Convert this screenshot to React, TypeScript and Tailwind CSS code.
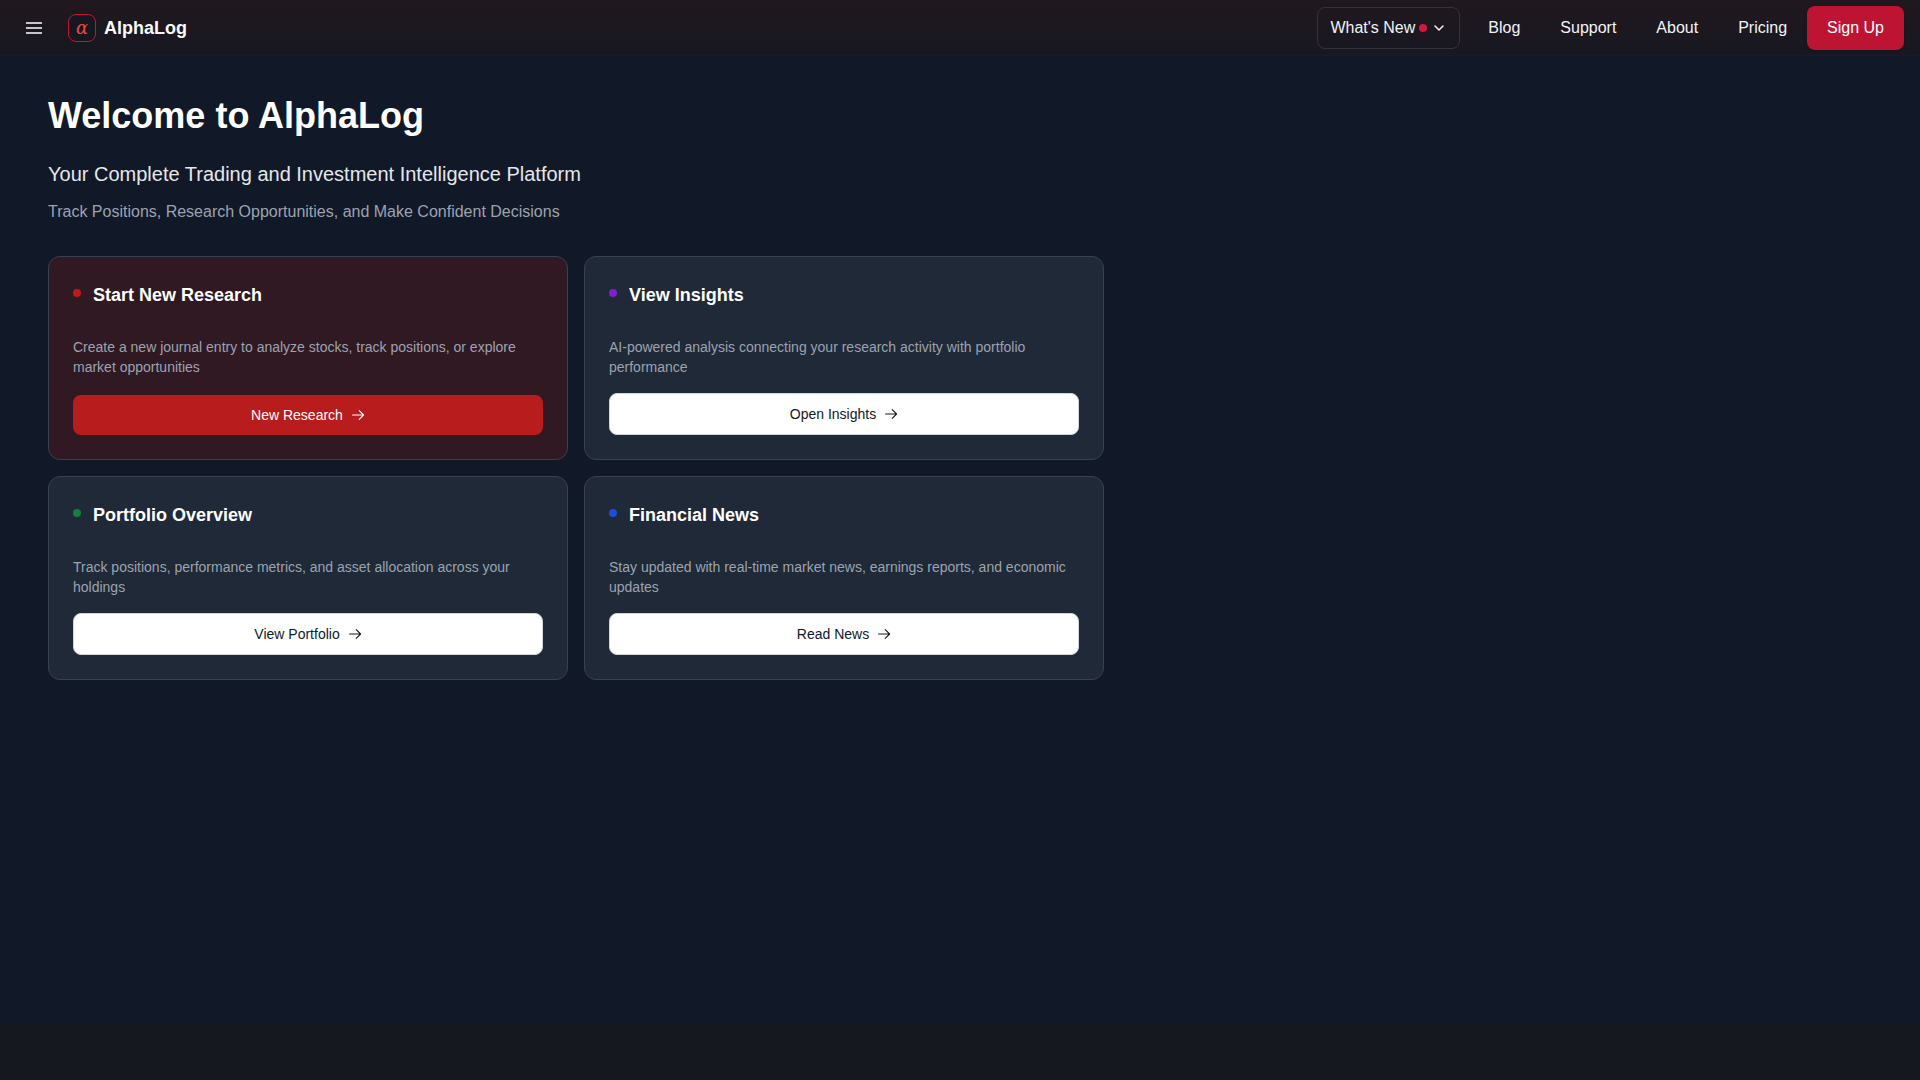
import React from "react";

const arrow = (
  <svg viewBox="0 0 14 14" className="h-3.5 w-3.5" fill="none" stroke="currentColor" strokeWidth="1.1" strokeLinecap="round" strokeLinejoin="round" aria-hidden="true">
    <path d="M1.6 7h11M8.2 2.6L12.6 7l-4.4 4.4" />
  </svg>
);

type CardData = {
  title: string;
  text: string;
  action: string;
  dot: string;
  primary?: boolean;
};

const cards: CardData[] = [
  {
    title: "Start New Research",
    text: "Create a new journal entry to analyze stocks, track positions, or explore market opportunities",
    action: "New Research",
    dot: "bg-[#b91c1c]",
    primary: true,
  },
  {
    title: "View Insights",
    text: "AI-powered analysis connecting your research activity with portfolio performance",
    action: "Open Insights",
    dot: "bg-[#7e22ce]",
  },
  {
    title: "Portfolio Overview",
    text: "Track positions, performance metrics, and asset allocation across your holdings",
    action: "View Portfolio",
    dot: "bg-[#15803d]",
  },
  {
    title: "Financial News",
    text: "Stay updated with real-time market news, earnings reports, and economic updates",
    action: "Read News",
    dot: "bg-[#1d4ed8]",
  },
];

function Card({ title, text, action, dot, primary }: CardData) {
  return (
    <article className={`flex min-h-[204px] flex-col rounded-xl border border-[#374151] p-6 ${primary ? "bg-[#301923]" : "bg-[#1f2937]"}`}>
      <div className="flex h-6 items-center gap-3">
        <span className={`h-2 w-2 rounded-full ${dot}`} />
        <h2 className="pt-1 text-lg font-bold text-white">{title}</h2>
      </div>
      <p className="mt-8 mb-4 text-sm text-[#9ca3af]">{text}</p>
      <button
        type="button"
        className={`mt-auto flex w-full items-center justify-center gap-2 rounded-lg text-sm ${
          primary ? "h-10 bg-[#b91c1c] text-white" : "h-[42px] border border-[#d1d5db] bg-white text-[#111827]"
        }`}
      >
        {action}
        {arrow}
      </button>
    </article>
  );
}

export default function App() {
  return (
    <div className="flex min-h-screen flex-col bg-[#16181f] font-['Liberation_Sans',Arial,sans-serif]">
      <header className="flex h-14 items-center justify-between border-b border-[#23181f] bg-linear-to-b from-[#21171e] to-[#171821] px-4">
        <div className="flex items-center">
          <button type="button" aria-label="Open menu" className="flex h-9 w-9 flex-col items-center justify-center gap-[3px] text-[#c4c5c8]">
            <span className="h-0.5 w-4 bg-current" />
            <span className="h-0.5 w-4 bg-current" />
            <span className="h-0.5 w-4 bg-current" />
          </button>
          <a href="#" className="ml-4 flex items-center gap-2 text-lg font-bold text-[#f9fafb]">
            <span className="flex h-7 w-7 items-center justify-center rounded-lg border border-[#c41435] bg-[#16181f] font-['DejaVu_Serif',serif] text-lg font-normal text-[#ef4444] italic">
              α
            </span>
            AlphaLog
          </a>
        </div>
        <nav className="flex items-center text-base text-[#f3f4f6]">
          <button type="button" className="mr-2 flex h-[42px] items-center rounded-lg border border-[#37303a] px-3">
            What's New
            <span className="ml-1 h-2 w-2 rounded-full bg-[#d4183d]" />
            <svg viewBox="0 0 16 16" className="ml-1 h-4 w-4" fill="none" stroke="currentColor" strokeWidth="1.5" strokeLinecap="round" strokeLinejoin="round" aria-hidden="true">
              <path d="M4 6l4 4 4-4" />
            </svg>
          </button>
          <a href="#blog" className="px-5">Blog</a>
          <a href="#support" className="px-5">Support</a>
          <a href="#about" className="px-5">About</a>
          <a href="#pricing" className="px-5">Pricing</a>
          <button type="button" className="h-11 rounded-lg bg-[#be1434] px-5 text-white shadow-sm">Sign Up</button>
        </nav>
      </header>
      <main className="flex-1 bg-[#111827]">
        <div className="w-full max-w-6xl px-12 py-10">
          <h1 className="text-4xl font-bold text-white">Welcome to AlphaLog</h1>
          <p className="mt-6 text-xl text-[#e5e7eb]">Your Complete Trading and Investment Intelligence Platform</p>
          <p className="mt-3 text-base text-[#9ca3af]">Track Positions, Research Opportunities, and Make Confident Decisions</p>
          <section className="mt-8 grid grid-cols-1 gap-4 md:grid-cols-2">
            {cards.map((card) => (
              <Card key={card.title} {...card} />
            ))}
          </section>
        </div>
      </main>
      <footer className="h-14" />
    </div>
  );
}
